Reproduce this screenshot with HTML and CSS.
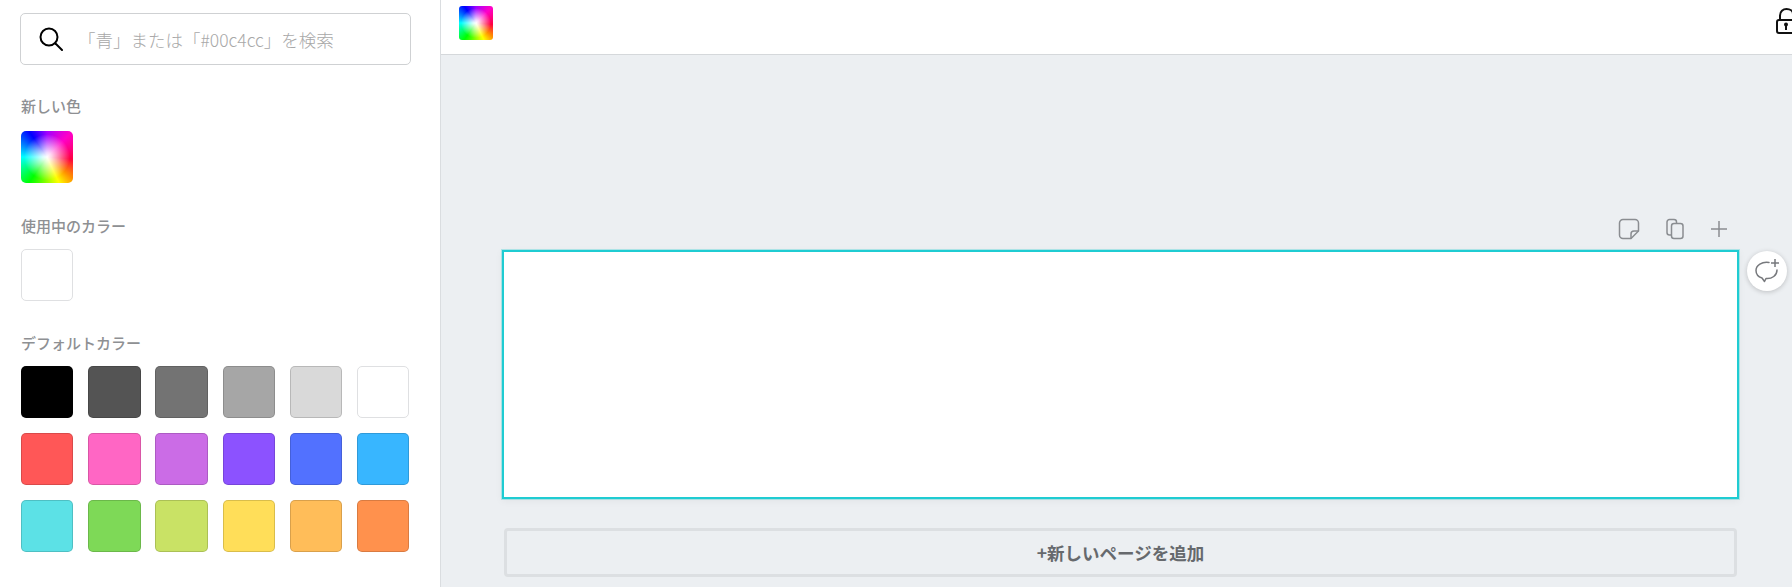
FILE: index.html
```html
<!DOCTYPE html>
<html lang="ja">

<head>
  <meta charset="UTF-8" />
  <title>カラー</title>
  <link rel="stylesheet" href="styles.css">
</head>

<body>
  <div class="app">
    <aside class="sidebar">
      <div class="search">
        <svg class="search-icon" width="24" height="24" viewBox="0 0 24 24" fill="none" stroke="#000" stroke-width="2">
          <circle cx="10" cy="10" r="8.500" />
          <path d="M16.500 16.500L23 23" stroke-linecap="round" />
        </svg>
        <span class="search-text">「青」または「#00c4cc」を検索</span>
      </div>

      <h4 class="label label-new">新しい色</h4>
      <div class="swatch rainbow"></div>

      <h4 class="label label-used">使用中のカラー</h4>
      <div class="swatch white"></div>

      <h4 class="label label-default">デフォルトカラー</h4>
      <div class="swatch-grid">
        <div class="swatch c-black"></div>
        <div class="swatch c-gray1"></div>
        <div class="swatch c-gray2"></div>
        <div class="swatch c-gray3"></div>
        <div class="swatch c-gray4"></div>
        <div class="swatch white"></div>
        <div class="swatch c-red"></div>
        <div class="swatch c-pink"></div>
        <div class="swatch c-orchid"></div>
        <div class="swatch c-purple"></div>
        <div class="swatch c-blue"></div>
        <div class="swatch c-sky"></div>
        <div class="swatch c-aqua"></div>
        <div class="swatch c-green"></div>
        <div class="swatch c-lime"></div>
        <div class="swatch c-yellow"></div>
        <div class="swatch c-amber"></div>
        <div class="swatch c-orange"></div>
      </div>
    </aside>

    <main class="main">
      <div class="topbar">
        <div class="rainbow top-swatch"></div>
        <svg class="lock" width="32" height="30" viewBox="0 0 32 30" fill="none" stroke="#111" stroke-width="2">
          <path d="M4 12V7.500C4 3.500 7 1 10.500 1S17 3 17 6" />
          <rect x="1" y="12" width="18" height="13" rx="2" />
          <circle cx="10" cy="16.500" r="2" fill="#111" stroke="none" />
          <path d="M10 17v5" />
        </svg>
      </div>

      <div class="stage">
        <div class="page-tools">
          <svg width="22" height="22" viewBox="0 0 22 22" fill="none" stroke="#8a8d91" stroke-width="1.500">
            <path d="M13 20.500H5A3.500 3.500 0 0 1 1.500 17V5A3.500 3.500 0 0 1 5 1.500h12A3.500 3.500 0 0 1 20.500 5v8z" stroke-linejoin="round" />
            <path d="M13 20.500V16a3 3 0 0 1 3-3h4.500" stroke-linejoin="round" />
          </svg>
          <svg width="20" height="22" viewBox="0 0 20 22" fill="none" stroke="#8a8d91" stroke-width="1.500">
            <rect x="6.500" y="5.500" width="11.500" height="15" rx="2.500" />
            <path d="M6.500 17H4.500A2.500 2.500 0 0 1 2 14.500V4a2.500 2.500 0 0 1 2.500-2.500H9A2.500 2.500 0 0 1 11.500 4v1.500" />
          </svg>
          <svg width="18" height="18" viewBox="0 0 18 18" fill="none" stroke="#8a8d91" stroke-width="1.500">
            <path d="M9 1v16M1 9h16" />
          </svg>
        </div>

        <div class="canvas-row">
          <div class="canvas"></div>
          <button class="comment-btn" type="button">
            <svg width="26" height="26" viewBox="0 0 26 26" fill="none" stroke="#77797d" stroke-width="1.500">
              <path d="M15 4.500C8 3.500 2 7 2 12.500c0 4 3 6.500 6 7.500l2.500 3.500 1.500-3c6 .5 11-3 11-8.500" stroke-linejoin="round" stroke-linecap="round" />
              <path d="M21 1v8M17 5h8" />
            </svg>
          </button>
        </div>

        <button class="add-page" type="button">+新しいページを追加</button>
      </div>
    </main>
  </div>
</body>

</html>
```

FILE: styles.css
```css
html,
body {
  margin: 0;
  height: 100%;
  overflow: hidden;
}

body {
  font-family: "Noto Sans CJK JP", "Noto Sans", sans-serif;
  color: #333;
  background: #fff;
}

.app {
  display: flex;
  height: 587px;
}

.sidebar {
  width: 441px;
  flex: none;
  box-sizing: border-box;
  padding: 13px 29px 0 21px;
  border-right: 1px solid #dadde0;
  background: #fff;
}

.search {
  display: flex;
  align-items: center;
  height: 52px;
  margin-left: -1px;
  box-sizing: border-box;
  border: 1px solid #cfd1d3;
  border-radius: 5px;
  padding-left: 18px;
}

.search-icon {
  flex: none;
}

.search-text {
  margin-left: 15px;
  font-size: 17.500px;
  font-weight: 300;
  color: #a8a8a8;
  white-space: nowrap;
}

.label {
  margin: 0;
  font-size: 15px;
  line-height: 20px;
  font-weight: 500;
  color: #8e9093;
}

.label-new {
  margin-top: 31px;
  margin-bottom: 15px;
}

.label-used {
  margin-top: 33px;
  margin-bottom: 13px;
}

.label-default {
  margin-top: 32px;
  margin-bottom: 13px;
}

.swatch {
  width: 52px;
  height: 52px;
  box-sizing: border-box;
  border-radius: 5px;
  border: 1px solid rgba(0, 0, 0, 0.15);
}

.swatch.white {
  border-color: #dfe0e2;
  background: #fff;
}

.swatch-grid {
  display: grid;
  grid-template-columns: repeat(6, 52.400px);
  column-gap: 14.800px;
  row-gap: 15px;
}

.swatch-grid .swatch {
  width: 100%;
}

.rainbow {
  border: none;
  background:
    radial-gradient(circle at 50% 50%, #fff 0, rgba(255, 255, 255, 0.85) 12%, rgba(255, 255, 255, 0) 62%),
    conic-gradient(from 0deg at 50% 50%, #a000ff, #ff00c8 45deg, #ff0040 95deg, #ff9000 130deg, #ffff00 155deg, #00ff00 215deg, #00ffff 270deg, #0000ff 325deg, #a000ff);
}

.c-black { background: #000; }
.c-gray1 { background: #545454; }
.c-gray2 { background: #737373; }
.c-gray3 { background: #a6a6a6; }
.c-gray4 { background: #d9d9d9; }
.c-red { background: #ff5757; }
.c-pink { background: #ff66c4; }
.c-orchid { background: #cb6ce6; }
.c-purple { background: #8c52ff; }
.c-blue { background: #5271ff; }
.c-sky { background: #38b6ff; }
.c-aqua { background: #5ce1e6; }
.c-green { background: #7ed957; }
.c-lime { background: #c9e265; }
.c-yellow { background: #ffde59; }
.c-amber { background: #ffbd59; }
.c-orange { background: #ff914d; }

.main {
  flex: 1;
  min-width: 0;
  display: flex;
  flex-direction: column;
  background: #eceff2;
}

.topbar {
  height: 54px;
  flex: none;
  display: flex;
  align-items: flex-start;
  justify-content: space-between;
  border-bottom: 1px solid #d5d8db;
  background: #fff;
}

.top-swatch {
  width: 34px;
  height: 34px;
  margin: 6px 0 0 18px;
  border-radius: 3px;
}

.lock {
  flex: none;
  margin: 8px -16px 0 0;
}

.stage {
  padding: 163px 0 0 61px;
}

.page-tools {
  display: flex;
  align-items: center;
  justify-content: flex-end;
  width: 1237px;
  height: 22px;
  gap: 25px;
  padding-right: 11px;
  box-sizing: border-box;
}

.canvas-row {
  display: flex;
  align-items: flex-start;
  margin-top: 10px;
}

.canvas {
  width: 1237px;
  height: 249px;
  flex: none;
  box-sizing: border-box;
  border: 2px solid #1fccd2;
  background: #fff;
  box-shadow: 0 0 0 1px rgba(31, 204, 210, 0.3), 0 2px 8px rgba(0, 0, 0, 0.05);
}

.comment-btn {
  flex: none;
  display: flex;
  align-items: center;
  justify-content: center;
  width: 40px;
  height: 40px;
  margin: 1px 0 0 8px;
  padding: 0;
  border: none;
  border-radius: 50%;
  background: #fff;
  box-shadow: 0 1px 5px rgba(0, 0, 0, 0.2);
}

.add-page {
  display: block;
  width: 1233px;
  height: 49px;
  margin: 29px 0 0 2px;
  padding: 0;
  border: 3px solid #dcdfe2;
  border-radius: 4px;
  background: #eceff2;
  font-family: inherit;
  font-size: 17.500px;
  font-weight: 700;
  color: #66696d;
}
```
